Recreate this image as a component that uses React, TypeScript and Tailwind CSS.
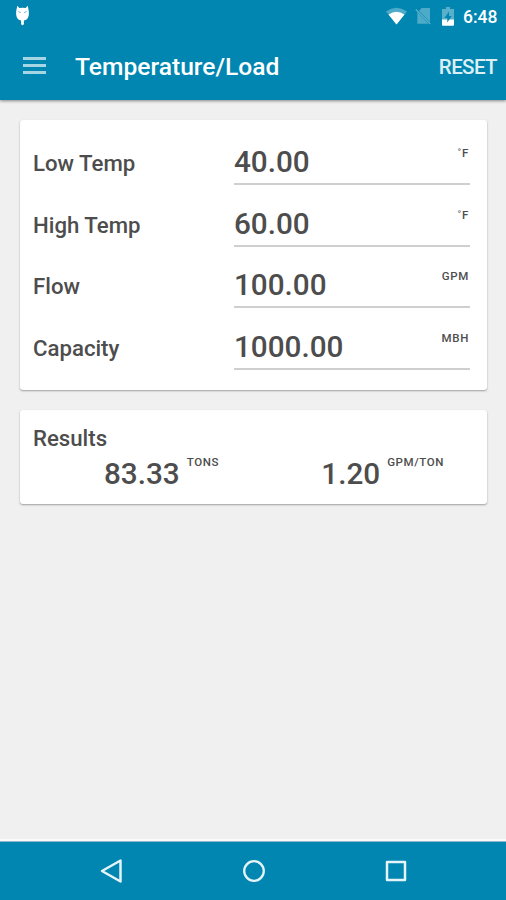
interface FieldProps {
  label: string
  value: string
  unit: string
}

interface ResultProps {
  value: string
  unit: string
}

const fields: FieldProps[] = [
  { label: "Low Temp", value: "40.00", unit: "˚F" },
  { label: "High Temp", value: "60.00", unit: "˚F" },
  { label: "Flow", value: "100.00", unit: "GPM" },
  { label: "Capacity", value: "1000.00", unit: "MBH" },
]

const StatusBar = () => {
  return (
    <div className="flex h-8 items-center justify-between pl-[15px] pr-[10px]">
      <svg width="15" height="22" viewBox="0 0 15 22" fill="#fff">
        <path d="M2.300.8 4.300 3q3.200-.7 6.400 0l2-2.200.8 3.700q.6 2.500.3 5.500c-.5 3.500-2.300 5-4.900 5.500v3.300a1.400 1.400 0 0 1-2.800 0v-3.300C3.500 15 1.700 13.500 1.200 10q-.3-3 .3-5.500z" />
        <path d="m3.400 6.500 2.400 1.200M11.600 6.500 9.200 7.700" stroke="#0086b0" strokeWidth=".6" />
      </svg>
      <div className="flex items-center">
        <svg width="21" height="18" viewBox="0 0 21 18">
          <path d="M0 4.500Q10.500-2.900 21 4.500L10.500 17.500z" fill="#fff" opacity=".3" />
          <path d="M2.500 7.500Q10.500 2 18.500 7.500L10.500 17.500z" fill="#fff" />
        </svg>
        <svg className="ml-2" width="17" height="18" viewBox="0 0 17 18">
          <path d="M6.500 1H15v14L4 4zM2.300 5.200 13.500 16.700H2.300z" fill="#fff" opacity=".3" />
          <path d="m.8 2.500 14.500 14.500" stroke="#fff" strokeWidth="1.300" opacity=".35" />
        </svg>
        <svg className="ml-[10px]" width="12" height="19" viewBox="0 0 12 19">
          <path d="M4 0h4v2h4v11H0V2h4z" fill="#fff" opacity=".35" />
          <path d="M0 12.500h12V18a.8.8 0 0 1-.8.8H.8A.8.8 0 0 1 0 18z" fill="#fff" />
          <path d="M7 4.500 2.500 11h2.800v4.500L9.700 9H7z" fill="#0086b0" />
        </svg>
        <span className="ml-[9px] mt-px w-[33px] whitespace-nowrap text-[17.5px] font-medium leading-5">6:48</span>
      </div>
    </div>
  )
}

const AppBar = () => {
  return (
    <div className="flex h-[68px] items-center pl-[23px] pr-[9px]">
      <button className="mb-0.5 flex w-[23px] flex-col gap-1" aria-label="Menu">
        <span className="h-[3px] bg-[#a6d5e4]" />
        <span className="h-[3px] bg-[#a6d5e4]" />
        <span className="h-[3px] bg-[#a6d5e4]" />
      </button>
      <h1 className="ml-[29px] mt-px text-[24.6px] font-medium leading-8">Temperature/Load</h1>
      <button className="ml-auto mt-0.5 text-[20.5px] font-medium leading-8 tracking-[-0.6px] text-[#dceff5]">RESET</button>
    </div>
  )
}

const Field = ({ label, value, unit }: FieldProps) => {
  return (
    <div className="flex h-[61.5px] items-start">
      <label className="mt-4 w-[201px] text-[22.2px] font-medium leading-7">{label}</label>
      <div className="flex h-[52px] w-[236px] items-start justify-between border-b-2 border-[#cfcfcf] pr-px">
        <span className="mt-[11px] text-[29.7px] font-medium leading-9">{value}</span>
        <span className="mt-3 text-[11.5px] font-medium leading-4 tracking-[0.7px]">{unit}</span>
      </div>
    </div>
  )
}

const Result = ({ value, unit }: ResultProps) => {
  return (
    <div className="flex items-start gap-[7px]">
      <span className="mt-[3px] text-[29.7px] font-medium leading-9">{value}</span>
      <span className="mt-px text-[11.5px] font-medium leading-4 tracking-[0.6px]">{unit}</span>
    </div>
  )
}

const NavBar = () => {
  return (
    <nav className="flex h-[58px] items-center justify-between pl-[100px] pr-[98px]">
      <svg width="23" height="24" viewBox="0 0 23 24" fill="none" stroke="#e4f4f9" strokeWidth="2.500" strokeLinejoin="round">
        <path d="M20.500 1.500v21L2 12z" />
      </svg>
      <svg width="23" height="24" viewBox="0 0 23 24" fill="none" stroke="#e4f4f9" strokeWidth="2.300">
        <circle cx="11" cy="12" r="9.800" />
      </svg>
      <svg width="23" height="24" viewBox="0 0 23 24" fill="none" stroke="#e4f4f9" strokeWidth="2.500" strokeLinejoin="round">
        <path d="M2 3h18v18h-18z" />
      </svg>
    </nav>
  )
}

const App = () => {
  return (
    <div className="flex h-[900px] w-[506px] flex-col bg-[#f0f0f0] font-['Roboto',sans-serif] text-[#4d4d4d]">
      <header className="h-[100px] bg-[#0086b0] text-white shadow-[0_1px_3px_rgba(0,0,0,0.45)]">
        <StatusBar />
        <AppBar />
      </header>
      <main className="flex flex-1 flex-col gap-5 px-5 pt-5">
        <section className="h-[270px] w-[467px] rounded-[3px] bg-white pl-[13px] pt-[13px] shadow-[0_1px_2px_rgba(0,0,0,0.35)]">
          {fields.map((field) => (
            <Field key={field.label} {...field} />
          ))}
        </section>
        <section className="h-[94px] w-[467px] rounded-[3px] bg-white px-[13px] pt-[14px] shadow-[0_1px_2px_rgba(0,0,0,0.35)]">
          <h2 className="text-[22.2px] font-medium leading-7">Results</h2>
          <div className="flex justify-between pl-[71px] pr-[30px] pt-px">
            <Result value="83.33" unit="TONS" />
            <Result value="1.20" unit="GPM/TON" />
          </div>
        </section>
      </main>
      <footer className="border-t border-[#8fb9c9] bg-[#0086b0] shadow-[0_-2px_1px_#fafafa]">
        <NavBar />
      </footer>
    </div>
  )
}

export default App
